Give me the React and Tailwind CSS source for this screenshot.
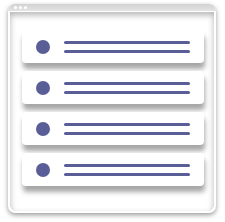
export default function App() {
  const rows = [0, 1, 2, 3];
  return (
    <div className="w-[225px] h-[222px] bg-white pt-[4px] pl-[8px]">
      <div className="w-[208px] h-[209px] rounded-[7px] bg-white shadow-[0_2px_5px_rgba(0,0,0,0.4)] overflow-hidden flex flex-col">
        {/* title bar */}
        <div className="h-[7px] bg-gradient-to-b from-[#d2d2d2] to-[#e4e4e4] flex items-center gap-[2px] pl-[6px]">
          <span className="w-[3px] h-[3px] rounded-full bg-white" />
          <span className="w-[3px] h-[3px] rounded-full bg-white" />
          <span className="w-[3px] h-[3px] rounded-full bg-white" />
        </div>
        <div className="h-[1px] bg-white" />
        {/* body */}
        <div className="flex-1 mx-[2px] mb-[2px] rounded-b-[6px] bg-white shadow-[inset_0_3px_6px_rgba(0,0,0,0.3)] flex flex-col gap-[8px] pt-[18px] pl-[12px]">
          {rows.map((r) => (
            <div
              key={r}
              className="w-[182px] h-[33px] rounded-[4px] bg-white shadow-[1px_6px_5px_rgba(0,0,0,0.35)] flex items-center pl-[14px] gap-[14px]"
            >
              <span className="w-[14px] h-[14px] rounded-full bg-[#5a5e96]" />
              <div className="flex flex-col gap-[6px]">
                <span className="block w-[126px] h-[3px] rounded-full bg-[#5a5e96]" />
                <span className="block w-[126px] h-[3px] rounded-full bg-[#5a5e96]" />
              </div>
            </div>
          ))}
        </div>
      </div>
    </div>
  );
}
